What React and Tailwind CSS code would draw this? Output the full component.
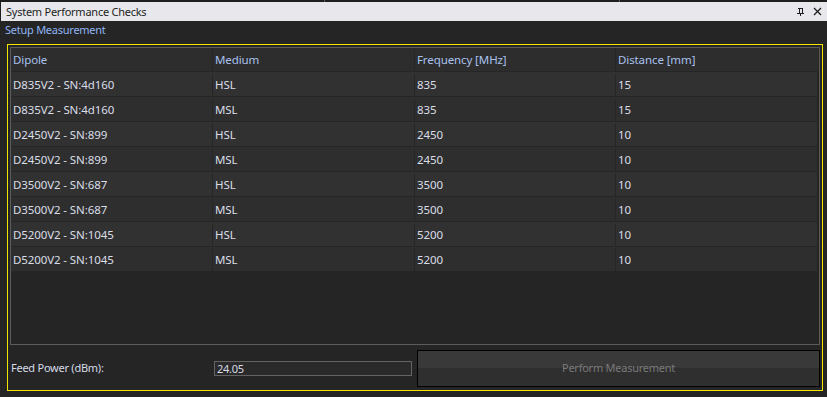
import React from "react";

const rows = [
  ["D835V2 - SN:4d160", "HSL", "835", "15"],
  ["D835V2 - SN:4d160", "MSL", "835", "15"],
  ["D2450V2 - SN:899", "HSL", "2450", "10"],
  ["D2450V2 - SN:899", "MSL", "2450", "10"],
  ["D3500V2 - SN:687", "HSL", "3500", "10"],
  ["D3500V2 - SN:687", "MSL", "3500", "10"],
  ["D5200V2 - SN:1045", "HSL", "5200", "10"],
  ["D5200V2 - SN:1045", "MSL", "5200", "10"],
];

function Cell({ children, className = "" }) {
  return (
    <div className={"shrink-0 h-full flex items-center pl-[2px] border-r border-[#262626] " + className}>
      {children}
    </div>
  );
}

export default function App() {
  return (
    <div
      className="w-[827px] h-[397px] bg-[#252526] flex flex-col overflow-hidden text-[11px] tracking-[-0.25px]"
      style={{ fontFamily: '"Noto Sans", "Open Sans", sans-serif' }}
    >
      {/* Title bar */}
      <div className="h-[21px] shrink-0 bg-[#1e1e1e] pt-[2px] pl-[1px] relative">
        <div className="absolute top-0 left-[324px] w-px h-[2px] bg-[#555]" />
        <div className="absolute top-0 left-[619px] w-px h-[2px] bg-[#555]" />
        <div className="h-[19px] bg-[#e8e8ec] flex items-center pl-[5px] text-[#1e1e1e]">
          <span className="flex-1 leading-none">System Performance Checks</span>
          <svg width="9" height="10" viewBox="0 0 9 10" className="mr-[8px]">
            <path d="M2 1h5M3 1v5M6 1v5M1 6h7M4.5 6v3" stroke="#1e1e1e" strokeWidth="1" fill="none" shapeRendering="crispEdges" />
          </svg>
          <svg width="9" height="9" viewBox="0 0 9 9" className="mr-[5px]">
            <path d="M1 1L8 8M8 1L1 8" stroke="#1e1e1e" strokeWidth="1.3" fill="none" />
          </svg>
        </div>
      </div>
      {/* Setup Measurement */}
      <div className="h-[16px] shrink-0 pl-[5px] flex items-center text-[#8fb4f2] mt-[1px]">
        Setup Measurement
      </div>
      {/* Yellow frame */}
      <div className="mt-[6px] ml-[7px] w-[816px] h-[347px] border border-[#f2e600] p-[2px] flex flex-col">
        {/* Grid */}
        <div className="w-[810px] h-[298px] shrink-0 border border-[#5c5c5c] bg-[#252525] flex flex-col text-[11.5px] tracking-[-0.1px]">
          <div className="h-[24px] flex bg-[#2d2d2d] border-b border-[#262626] text-[#a9c1ee] w-[808px] pt-[1px]">
            <Cell className="w-[202px]">Dipole</Cell>
            <Cell className="w-[202px]">Medium</Cell>
            <Cell className="w-[201px]">Frequency [MHz]</Cell>
            <Cell className="w-[203px]">Distance [mm]</Cell>
          </div>
          {rows.map((r, i) => (
            <div
              key={i}
              className={
                "h-[25px] flex border-b border-[#262626] text-[#dadee8] w-[806px] pt-[2px] " +
                (i % 2 === 0 ? "bg-[#313131]" : "bg-[#2e2e2e]")
              }
            >
              <Cell className="w-[202px]">{r[0]}</Cell>
              <Cell className="w-[202px]">{r[1]}</Cell>
              <Cell className="w-[201px]">{r[2]}</Cell>
              <Cell className="border-r-0 w-[201px]">{r[3]}</Cell>
            </div>
          ))}
        </div>
        {/* Bottom */}
        <div className="flex-1 flex items-center pt-[3px]">
          <div className="w-[204px] pl-[1px] text-[#d6dbe6]">Feed Power (dBm):</div>
          <div className="w-[198px] h-[15px] border border-[#646464] bg-[#2a2a2a] flex items-center pl-[2px] text-[#d6dbe6] leading-none">
            24.05
          </div>
          <button className="ml-[5px] w-[403px] h-[37px] border border-black flex items-center justify-center text-[#7a7a7a] bg-[linear-gradient(#393939_0%,#393939_50%,#2f2f2f_50%,#2f2f2f_100%)]">
            Perform Measurement
          </button>
        </div>
      </div>
    </div>
  );
}
